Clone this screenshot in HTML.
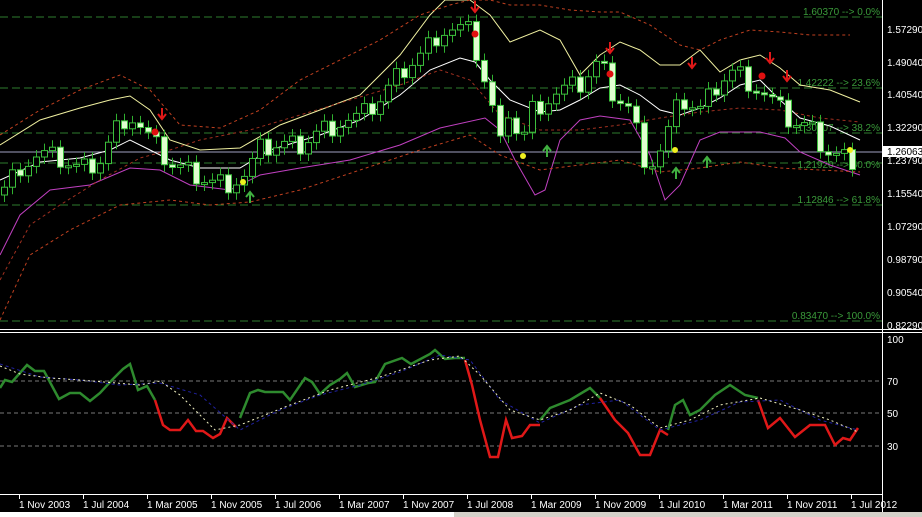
<!DOCTYPE html>
<html><head><meta charset="utf-8">
<style>
html,body{margin:0;padding:0;background:#000;width:922px;height:517px;overflow:hidden}
svg{display:block}
text{font-family:"Liberation Sans",sans-serif;font-size:10px}
</style></head><body>
<svg id="s" width="922" height="517" xmlns="http://www.w3.org/2000/svg">
<rect width="922" height="517" fill="#000"/>
<g stroke="#2e7d2e" stroke-dasharray="8,4" stroke-width="1">
<line x1="0" y1="17" x2="882" y2="17"/>
<line x1="0" y1="88" x2="882" y2="88"/>
<line x1="0" y1="133" x2="882" y2="133"/>
<line x1="0" y1="163" x2="882" y2="163"/>
<line x1="0" y1="205" x2="882" y2="205"/>
<line x1="0" y1="321" x2="882" y2="321"/>
</g>
<g fill="#3a9a3a" text-anchor="end" font-size="10">
<text x="880" y="15">1.60370 --&gt; 0.0%</text>
<text x="880" y="86">1.42222 --&gt; 23.6%</text>
<text x="880" y="131">1.30807 --&gt; 38.2%</text>
<text x="880" y="168">1.21920 --&gt; 50.0%</text>
<text x="880" y="203">1.12846 --&gt; 61.8%</text>
<text x="880" y="319">0.83470 --&gt; 100.0%</text>
</g>
<line x1="0" y1="152" x2="882" y2="152" stroke="#a0a0c0"/>
<g id="bands" fill="none"></g>
<g id="candles"></g>
<g id="marks"></g>
<line x1="882.5" y1="0" x2="882.5" y2="517" stroke="#fff"/>
<g fill="#fff" font-size="10">
<text x="887" y="33">1.57290</text>
<text x="887" y="66">1.49040</text>
<text x="887" y="98">1.40540</text>
<text x="887" y="131">1.32290</text>
<text x="887" y="164">1.23790</text>
<text x="887" y="197">1.15540</text>
<text x="887" y="230">1.07290</text>
<text x="887" y="263">0.98790</text>
<text x="887" y="296">0.90540</text>
<text x="887" y="329">0.82290</text>
</g>
<rect x="883" y="146" width="39" height="11" fill="#fff"/>
<text x="887" y="155" fill="#000">1.26063</text>
<line x1="0" y1="329.5" x2="922" y2="329.5" stroke="#fff"/>
<line x1="0" y1="332.5" x2="922" y2="332.5" stroke="#fff"/>
<g stroke="#777" stroke-dasharray="4,3">
<line x1="0" y1="381" x2="882" y2="381"/>
<line x1="0" y1="413" x2="882" y2="413"/>
<line x1="0" y1="446" x2="882" y2="446"/>
</g>
<g fill="#fff" font-size="10">
<text x="887" y="343">100</text>
<text x="887" y="385">70</text>
<text x="887" y="417">50</text>
<text x="887" y="450">30</text>
</g>
<g id="ind" fill="none"></g>
<line x1="0" y1="494.5" x2="882" y2="494.5" stroke="#fff"/>
<g id="dates" fill="#fff" font-size="10"></g>
<rect x="0" y="512" width="922" height="5" fill="#d4d0c8"/>
<rect x="0" y="512" width="454" height="5" fill="#fff"/>
</svg>
<script>
const NS="http://www.w3.org/2000/svg";
function el(p,t,a){const e=document.createElementNS(NS,t);for(const k in a)e.setAttribute(k,a[k]);document.getElementById(p).appendChild(e);return e;}
function interp(pts,x){for(let i=0;i<pts.length-1;i++){if(x>=pts[i][0]&&x<=pts[i+1][0]){const t=(x-pts[i][0])/(pts[i+1][0]-pts[i][0]);return pts[i][1]+t*(pts[i+1][1]-pts[i][1]);}}return pts[pts.length-1][1];}
function path(pts){return "M"+pts.map(p=>p[0]+","+p[1]).join(" L");}
const price=[[0,195],[20,165],[40,155],[60,160],[80,170],[100,160],[120,120],[130,115],[150,140],[170,165],[190,172],[210,182],[230,182],[245,176],[260,150],[280,145],[300,145],[320,130],[340,122],[360,118],[380,100],[400,72],[420,55],[440,30],[460,30],[470,33],[478,60],[490,100],[500,145],[510,100],[520,150],[530,110],[545,100],[560,92],[580,85],[600,60],[610,90],[630,110],[645,160],[655,162],[665,140],[680,100],[700,110],[720,80],[735,70],[750,82],[770,100],[790,122],[810,128],[825,150],[835,155],[850,158],[860,162]];
el("bands","path",{d:path([[0,145],[40,120],[80,108],[110,100],[130,96],[150,110],[170,140],[200,150],[240,148],[280,125],[320,110],[360,95],[400,55],[430,15],[445,0],[470,0],[490,15],[510,42],[540,30],[560,40],[580,75],[600,55],[620,42],[640,50],[660,65],[680,65],[700,50],[720,72],[740,60],[760,55],[780,68],[800,85],[830,90],[860,102]]),stroke:"#f0f0a0"});
el("bands","path",{d:path([[0,180],[40,162],[80,158],[110,150],[130,140],[150,150],[170,160],[200,168],[240,168],[270,150],[320,135],[360,120],[400,95],[430,70],[460,58],[475,62],[490,80],[510,100],[540,112],[560,110],[580,100],[600,88],[620,85],[640,95],[660,110],[680,115],[700,108],[720,98],[740,85],[760,80],[780,100],[800,118],[830,126],[860,140]]),stroke:"#fff"});
el("bands","path",{d:path([[0,255],[20,215],[50,190],[90,185],[130,168],[160,170],[190,185],[230,190],[260,175],[300,168],[350,160],[400,145],[440,128],[485,118],[500,130],[515,160],[535,195],[545,190],[560,140],[580,120],[600,116],[630,120],[650,155],[665,200],[680,185],[700,140],[720,132],[760,132],[785,138],[800,152],[830,165],[860,175]]),stroke:"#c040c0"});
el("bands","path",{d:path([[0,320],[30,255],[70,230],[120,205],[170,200],[210,205],[250,202],[300,190],[360,170],[420,150],[470,135],[500,155],[540,170],[580,165],[620,160],[660,172],[700,168],[740,162],[780,168],[820,170],[860,172]]),stroke:"#c04020","stroke-dasharray":"3,3"});
el("bands","path",{d:path([[0,135],[40,110],[80,90],[120,75],[150,90],[180,125],[220,128],[260,110],[300,80],[340,60],[380,40],[420,15],[450,5],[470,0],[490,0],[510,5],[540,5],[570,10],[600,12],[620,12],[650,25],[680,45],[700,50],[720,40],[750,30],[780,32],[810,35],[850,35]]),stroke:"#c04020","stroke-dasharray":"3,3"});
el("bands","path",{d:path([[0,280],[30,225],[60,205],[100,180],[140,158],[170,150],[200,140],[250,130],[300,115],[350,100],[400,85],[440,70],[470,80],[500,115],[540,130],[580,130],[620,125],[660,118],[700,112],[740,108],[780,110],[820,118],[860,122]]),stroke:"#a03020","stroke-dasharray":"3,3"});
let prev=interp(price,0);
for(let x=4;x<=858;x+=8){
 const c=interp(price,x)+((x*37)%13-6)*1.8;
 const o=prev;prev=c;
 const top=Math.min(o,c),bot=Math.max(o,c),h=Math.max(2,bot-top);
 el("candles","line",{x1:x+0.5,x2:x+0.5,y1:top-7,y2:bot+7,stroke:"#2fb02f"});
 if(c<o) el("candles","rect",{x:x-2.5,y:top,width:6,height:h,fill:"#000",stroke:"#3cc03c"});
 else el("candles","rect",{x:x-2.5,y:top,width:6,height:h,fill:"#e0ffd0",stroke:"#3cc03c"});
}
[[155,132],[475,34],[610,74],[762,76]].forEach(p=>el("marks","circle",{cx:p[0],cy:p[1],r:3.5,fill:"#e01010"}));
[[243,182],[523,156],[675,150],[850,150]].forEach(p=>el("marks","circle",{cx:p[0],cy:p[1],r:3,fill:"#f0f020"}));
function down(x,y){el("marks","path",{d:`M${x},${y} L${x},${y+10} M${x-4},${y+6} L${x},${y+11} L${x+4},${y+6}`,stroke:"#e01818","stroke-width":2,fill:"none"});}
function up(x,y){el("marks","path",{d:`M${x},${y+11} L${x},${y+1} M${x-4},${y+5} L${x},${y} L${x+4},${y+5}`,stroke:"#40b040","stroke-width":2,fill:"none"});}
[[162,108],[475,1],[610,42],[692,57],[770,52],[787,70]].forEach(p=>down(p[0],p[1]));
[[250,192],[547,146],[676,168],[707,157]].forEach(p=>up(p[0],p[1]));
const g=[[0,388],[5,380],[12,382],[27,365],[35,371],[44,371],[59,399],[70,393],[80,393],[90,401],[100,393],[112,380],[123,369],[130,364],[138,390],[147,386],[155,400]];
el("ind","path",{d:path(g),stroke:"#2e8a2e","stroke-width":2.5});
el("ind","path",{d:path([[155,400],[163,425],[170,430],[180,430],[188,420],[196,431],[203,431],[213,438],[220,434],[227,418],[236,427]]),stroke:"#e01818","stroke-width":2.5});
el("ind","path",{d:path([[240,418],[250,393],[258,390],[265,392],[283,392],[290,400],[305,378],[312,382],[320,394],[330,385],[340,379],[347,373],[355,387],[368,383],[375,382],[385,364],[402,358],[411,364],[430,354],[435,350],[445,359],[455,358],[465,358]]),stroke:"#2e8a2e","stroke-width":2.5});
el("ind","path",{d:path([[465,360],[472,385],[480,420],[490,457],[498,457],[506,420],[512,438],[522,436],[530,425],[540,425]]),stroke:"#e01818","stroke-width":2.5});
el("ind","path",{d:path([[540,420],[550,408],[570,400],[590,388],[600,398]]),stroke:"#2e8a2e","stroke-width":2.5});
el("ind","path",{d:path([[600,398],[615,420],[628,433],[640,455],[650,455],[660,430],[668,435]]),stroke:"#e01818","stroke-width":2.5});
el("ind","path",{d:path([[668,430],[675,405],[683,400],[690,415],[700,410],[715,395],[730,385],[745,395],[758,398]]),stroke:"#2e8a2e","stroke-width":2.5});
el("ind","path",{d:path([[758,400],[768,428],[780,418],[795,437],[810,425],[825,425],[835,445],[843,438],[850,440],[858,428]]),stroke:"#e01818","stroke-width":2.5});
el("ind","path",{d:path([[0,364],[40,377],[80,380],[120,385],[160,383],[200,395],[240,430],[280,410],[320,395],[360,385],[400,372],[440,355],[470,360],[500,400],[540,423],[580,405],[620,400],[660,430],[700,420],[740,402],[780,400],[820,420],[858,430]]),stroke:"#2020a0","stroke-dasharray":"3,3"});
el("ind","path",{d:path([[0,366],[20,374],[50,378],[80,380],[140,385],[160,381],[180,395],[215,430],[240,425],[290,405],[330,390],[380,377],[430,360],[460,356],[480,375],[510,410],[540,420],[570,410],[600,393],[630,405],[660,428],[690,420],[720,405],[760,398],[800,410],[830,420],[858,432]]),stroke:"#f0f0c0","stroke-dasharray":"2,3"});
const d=["1 Nov 2003","1 Jul 2004","1 Mar 2005","1 Nov 2005","1 Jul 2006","1 Mar 2007","1 Nov 2007","1 Jul 2008","1 Mar 2009","1 Nov 2009","1 Jul 2010","1 Mar 2011","1 Nov 2011","1 Jul 2012"];
d.forEach((t,i)=>{const x=19+i*64;el("dates","line",{x1:x+0.5,x2:x+0.5,y1:495,y2:499,stroke:"#fff"});el("dates","text",{x:x,y:508}).textContent=t;});
</script>
</body></html>
